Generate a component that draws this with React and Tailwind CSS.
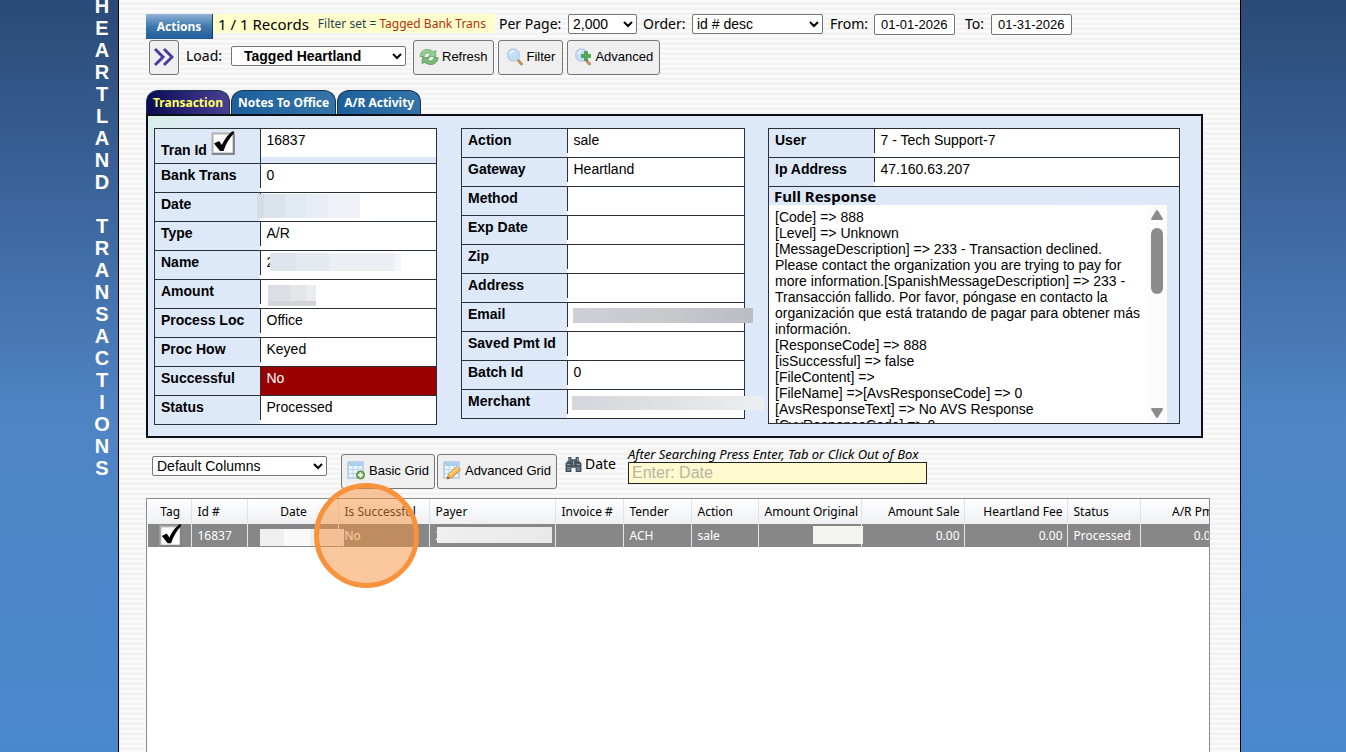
import clsx from "clsx";

const LETTERS = "HEARTLAND TRANSACTIONS".split("");

const TRAN_ROWS = [
  { label: "Bank Trans", value: "0" },
  { label: "Date", mask: "date" },
  { label: "Type", value: "A/R" },
  { label: "Name", value: "2", mask: "name" },
  { label: "Amount", mask: "amount" },
  { label: "Process Loc", value: "Office" },
  { label: "Proc How", value: "Keyed" },
  { label: "Successful", value: "No", danger: true },
  { label: "Status", value: "Processed" },
];

const ACTION_ROWS = [
  { label: "Action", value: "sale" },
  { label: "Gateway", value: "Heartland" },
  { label: "Method" },
  { label: "Exp Date" },
  { label: "Zip" },
  { label: "Address" },
  { label: "Email", mask: "email" },
  { label: "Saved Pmt Id" },
  { label: "Batch Id", value: "0" },
  { label: "Merchant", mask: "merchant" },
];

const USER_ROWS = [
  { label: "User", value: "7 - Tech Support-7" },
  { label: "Ip Address", value: "47.160.63.207" },
];

const RESPONSE = [
  "[Code] => 888",
  "[Level] => Unknown",
  "[MessageDescription] => 233 - Transaction declined. Please contact the organization you are trying to pay for more information.[SpanishMessageDescription] => 233 - Transacción fallido. Por favor, póngase en contacto la organización que está tratando de pagar para obtener más información.",
  "[ResponseCode] => 888",
  "[isSuccessful] => false",
  "[FileContent] =>",
  "[FileName] =>[AvsResponseCode] => 0",
  "[AvsResponseText] => No AVS Response",
  "[CvvResponseCode] => 0",
];

const MASKS = {
  date: "-left-[4px] top-[1px] w-[103px] h-[24px] bg-[linear-gradient(to_right,#d3dbe3_7%,#dbe4ed_7%,#dbe4ed_27%,#e2eaf1_27%,#e2eaf1_48%,#e8edf4_48%,#e8edf4_69%,#eff3f8_69%)]",
  name: "left-[9px] top-[2px] w-[131px] h-[18px] bg-[linear-gradient(to_right,#dfe3ec_20%,#e4e8ef_20%,#e4e8ef_45%,#ebeef3_45%,#ebeef3_95%,#f3f5f8_95%)]",
  amount: "left-[7px] top-[5px] w-[48px] h-[21px] border-b-[5px] border-[#d3d5da] bg-[linear-gradient(to_right,#dcdee3_46%,#e4e5e9_46%,#e4e5e9_80%,#ebecef_80%)]",
  email: "left-[5px] top-[5px] w-[180px] h-[15px] bg-linear-to-r from-[#cfd0d6] via-[#c8c9cd] to-[#bcbdc4]",
  merchant: "left-[4px] top-[6px] w-[192px] h-[14px] bg-linear-to-r from-[#d4d6dc] via-[#e0e1e3] to-[#eceff0]",
};

const COLUMNS = [
  { name: "Tag", width: "w-[43px]", align: "text-center" },
  { name: "Id #", width: "w-[56px]", value: "16837" },
  { name: "Date", width: "w-[91px]", align: "text-center", mask: "left-[12px] w-[84px] top-[5px] h-[17px] bg-[linear-gradient(to_right,#efefef_28%,#f9f9f9_28%,#f9f9f9_60%,#efefef_60%)] z-10" },
  { name: "Is Successful", width: "w-[91px]", value: "No" },
  { name: "Payer", width: "w-[126px]", value: "2", mask: "left-[7px] w-[115px] top-[3px] h-[16px] bg-linear-to-r from-[#efefef] to-[#e9e9e9]" },
  { name: "Invoice #", width: "w-[68px]" },
  { name: "Tender", width: "w-[68px]", value: "ACH" },
  { name: "Action", width: "w-[67px]", value: "sale" },
  { name: "Amount Original", width: "w-[103px]", align: "text-right", mask: "left-[54px] w-[50px] top-[2px] h-[18px] bg-[#f3f3ef] z-10" },
  { name: "Amount Sale", width: "w-[103px]", align: "text-right", value: "0.00" },
  { name: "Heartland Fee", width: "w-[103px]", align: "text-right", value: "0.00" },
  { name: "Status", width: "w-[73px]", value: "Processed" },
  { name: "A/R Pmt", width: "w-[82px]", align: "text-right", value: "0.00" },
];

const SANS = "font-['Liberation_Sans',Arial,sans-serif]";
const TAHOMA = "font-['Noto_Sans',Tahoma,sans-serif]";
const SELECT = `h-[20px] rounded-[2px] border border-[#767676] bg-white text-black ${SANS}`;
const BUTTON = `flex h-[35px] items-center gap-[3px] rounded-[3px] border border-[#767676] bg-[#efefef] pb-[2px] text-[13px] text-black ${SANS}`;

function CheckedBox({ size }) {
  return (
    <svg width={size} height={size} viewBox="0 0 24 24">
      <rect x="1.500" y="2.500" width="21" height="20" fill="#fff" stroke="#b0b0b0" strokeWidth="2" />
      <path d="M1 23h22V3" fill="none" stroke="#777" strokeWidth="1.500" />
      <path d="M3 12.500l5-2.500 3 4c2-5 6-11 11-14l1.500 1.500C18.500 7 15 12.500 12.500 20H9z" fill="#000" />
    </svg>
  );
}

function RefreshIcon() {
  return (
    <svg width="20" height="20" viewBox="0 0 20 20">
      <path d="M1 9.500C1 5 4.500 2.500 8.500 2.500c2.500 0 4.500 1 5.700 2.300L17 3.500 16.500 9.500H9.500L11.500 7c-.8-.8-2-1.200-3.200-1-2 .2-3 1.500-3.300 3.500z" fill="#93cd90" stroke="#64a765" strokeWidth=".8" />
      <path d="M19 10.500c0 4.500-3.500 7-7.500 7-2.500 0-4.500-1-5.700-2.300L3 16.500l.5-6h7L8.500 13c.8.800 2 1.200 3.200 1 2-.2 3-1.500 3.300-3.500z" fill="#79bb79" stroke="#549556" strokeWidth=".8" />
    </svg>
  );
}

function LensIcon({ plus }) {
  return (
    <svg width="18" height="18" viewBox="0 0 18 18">
      <path d="M11.500 11.500l4 4.500" stroke="#c09060" strokeWidth="3" strokeLinecap="round" />
      <circle cx="7.500" cy="7" r="6" fill="#c3def8" stroke="#b9cde6" strokeWidth="1.400" />
      <path d="M4 6c.6-2 2-3 4-3" fill="none" stroke="#eff8ff" strokeWidth="1.500" />
      {plus && <path d="M10.500 3.500h3v3h3v3h-3v3h-3v-3h-3v-3h3z" fill="#4fae50" stroke="#3b8f42" strokeWidth=".7" />}
    </svg>
  );
}

function GridIcon({ pencil }) {
  return (
    <svg width="19" height="19" viewBox="0 0 19 19">
      <rect x="1" y="1" width="15" height="16" fill="#eaf4fd" stroke="#8fb3d9" />
      <path d="M1.500 1.500h14V5h-14z" fill="#a9cdee" />
      <path d="M1 8.500h15M1 12.500h15M6 5v12M11 5v12" stroke="#bcd3ea" />
      {pencil ? (
        <g>
          <path d="M4 18l1.500-5L14 5.500l3.500 3.500L9 16.500z" fill="#f4b94f" stroke="#c98226" strokeWidth=".8" />
          <path d="M6.500 14l8.500-7.500" stroke="#fbdc93" strokeWidth="1.200" />
          <path d="M4 18l.8-2.500 1.700 1.700z" fill="#5a4630" />
        </g>
      ) : (
        <g>
          <circle cx="13.500" cy="14" r="4" fill="#7db665" stroke="#4b8438" />
          <path d="M13.500 11.500v5M11 14h5" stroke="#fff" strokeWidth="1.600" />
        </g>
      )}
    </svg>
  );
}

function Binoculars() {
  return (
    <svg width="17" height="17" viewBox="0 0 16 16">
      <path d="M3 1h3v2h4V1h3v3l2.500 3v8H10v-4H6v4H.500V7L3 4z" fill="#46535f" />
      <path d="M2 8h3M11 8h3M2 11h3M11 11h3M2 13h3M11 13h3M4 2v3M12 2v3M8 4v5" stroke="#93a3b1" />
    </svg>
  );
}

function Field({ label, value, mask, danger, tag }) {
  return (
    <tr className="border-b border-[#2b2f36]">
      <th scope="row" className={clsx("w-[105px] px-[6px] pt-[2px] text-left align-top font-bold", tag ? "h-[35px]" : "h-[29px]")}>
        <span className="flex items-baseline gap-1">
          {label}
          {tag && <CheckedBox size={24} />}
        </span>
      </th>
      <td className={clsx("p-0 align-top", danger && "bg-[#990000] text-white", !tag && !danger && "bg-white")}>
        <div className={clsx("relative border-l border-[#2b2f36] px-[6px] pt-[2px]", tag ? "h-[34px] bg-[linear-gradient(white_28px,transparent_28px)]" : "h-[24px]")}>
          {value}
          {mask && <span className={clsx("absolute", MASKS[mask])} />}
        </div>
      </td>
    </tr>
  );
}

function Tab({ children, active }) {
  return (
    <button
      className={clsx(
        "h-[24px] rounded-t-[12px] border border-b-0 border-[#16344f] px-[6px] text-xs font-bold",
        active ? "bg-linear-to-r from-[#0d0a55] to-[#4a3f94] text-[#ffff66]" : "bg-linear-to-r from-[#1c5f9c] to-[#3474a8] text-white"
      )}
    >
      {children}
    </button>
  );
}

function Toolbar() {
  return (
    <div className="text-sm leading-[20px]">
      <div className="flex h-[26px] items-start whitespace-nowrap">
        <button className="h-[25px] w-[67px] border-r border-[#1d3d5c] bg-linear-to-b from-[#8fb3d6] via-[#3f77ad] to-[#1f5c99] text-xs font-bold text-white">Actions</button>
        <div className="flex h-[19px] w-[282px] items-center gap-[9px] bg-[#ffffcc] pl-[5px] text-[15px]">
          <span>1 / 1 Records</span>
          <span className="pt-px text-xs text-[#1f3f4f]">
            Filter set = <span className="text-[#b03010]">Tagged Bank Trans</span>
          </span>
        </div>
        <label htmlFor="perPage" className="ml-[4px] w-[69px]">Per Page:</label>
        <select id="perPage" className={clsx(SELECT, "w-[69px]")}>
          <option>2,000</option>
        </select>
        <label htmlFor="order" className="ml-[6px] w-[49px]">Order:</label>
        <select id="order" className={clsx(SELECT, "w-[131px]")}>
          <option>id # desc</option>
        </select>
        <label htmlFor="from" className="ml-[7px] w-[44px]">From:</label>
        <input id="from" defaultValue="01-01-2026" className={clsx(SELECT, "h-[21px] w-[81px] px-[6px] text-[13px]")} />
        <label htmlFor="to" className="ml-[10px] w-[26px]">To:</label>
        <input id="to" defaultValue="01-31-2026" className={clsx(SELECT, "h-[21px] w-[81px] px-[6px] text-[13px]")} />
      </div>
      <div className="flex items-start pl-[3px]">
        <button aria-label="Expand" className={clsx(BUTTON, "w-[30px] justify-center")}>
          <svg width="20" height="20" viewBox="0 0 20 20" fill="none" stroke="#483d9b" strokeWidth="3">
            <path d="M1 2l8 8-8 8M10 2l8 8-8 8" />
          </svg>
        </button>
        <label htmlFor="load" className="mt-[6px] ml-[7px] w-[45px]">Load:</label>
        <select id="load" className={clsx(SELECT, "mt-[6px] w-[175px] pl-[8px] font-bold")}>
          <option>Tagged Heartland</option>
        </select>
        <div className="ml-[7px] flex gap-1">
          <button className={clsx(BUTTON, "px-[5px]")}><RefreshIcon />Refresh</button>
          <button className={clsx(BUTTON, "px-[7px]")}><LensIcon />Filter</button>
          <button className={clsx(BUTTON, "px-[6px]")}><LensIcon plus />Advanced</button>
        </div>
      </div>
    </div>
  );
}

function TransactionPanel() {
  return (
    <section className={`mr-[37px] flex items-start border-2 border-[#0b0f18] bg-linear-to-br from-[#d9f0e8] via-[#dde8f8] via-5% to-[#dde8fa] px-[6px] pt-[12px] pb-[11px] text-sm leading-[18px] text-black ${SANS}`}>
      <table className="w-[283px] table-fixed border-collapse border border-[#2b2f36]">
        <tbody>
          <Field tag label="Tran Id" value="16837" />
          {TRAN_ROWS.map((r) => <Field key={r.label} {...r} />)}
        </tbody>
      </table>
      <table className="ml-[24px] w-[284px] table-fixed border-collapse border border-[#2b2f36]">
        <tbody>
          {ACTION_ROWS.map((r) => <Field key={r.label} {...r} />)}
        </tbody>
      </table>
      <div className="ml-[23px] flex h-[296px] w-[412px] flex-col border border-t-0 border-[#2b2f36]">
        <table className="-mx-px w-[412px] shrink-0 table-fixed border-collapse border border-[#2b2f36]">
          <tbody>
            {USER_ROWS.map((r) => <Field key={r.label} {...r} />)}
          </tbody>
        </table>
        <h2 className={`h-[18px] shrink-0 pl-[5px] text-[15px] leading-[18px] font-bold ${TAHOMA}`}>Full Response</h2>
        <div className="mr-[12px] flex min-h-0 flex-1 bg-white">
          <div className="flex-1 overflow-hidden pt-[4px] pl-[6px] leading-[16px]">
            {RESPONSE.map((line) => <p key={line}>{line}</p>)}
          </div>
          <div className="flex w-[20px] flex-col items-center justify-between bg-[#fcfcfc] pt-[5px] pb-[5px]">
            <svg width="12" height="10" viewBox="0 0 12 10"><path d="M6 1l5 8H1z" fill="#8b8b8b" stroke="#8b8b8b" strokeWidth="2" strokeLinejoin="round" /></svg>
            <div className="mt-[8px] mb-auto h-[66px] w-[12px] rounded-full bg-[#8b8b8b]" />
            <svg width="12" height="10" viewBox="0 0 12 10"><path d="M6 9l5-8H1z" fill="#8b8b8b" stroke="#8b8b8b" strokeWidth="2" strokeLinejoin="round" /></svg>
          </div>
        </div>
      </div>
    </section>
  );
}

function SearchBar() {
  return (
    <div className="flex items-start pt-[8px] pl-[6px]">
      <select aria-label="Columns" className={clsx(SELECT, "mt-[10px] w-[175px] text-sm")}>
        <option>Default Columns</option>
      </select>
      <div className="mt-[8px] ml-[14px] flex gap-[2px]">
        <button className={clsx(BUTTON, "px-[5px]")}><GridIcon />Basic Grid</button>
        <button className={clsx(BUTTON, "px-[5px]")}><GridIcon pencil />Advanced Grid</button>
      </div>
      <label htmlFor="date" className="mt-[8px] ml-[8px] flex w-[63px] items-center gap-[3px] text-sm"><Binoculars />Date</label>
      <div className="w-[299px]">
        <p className="text-[13px] leading-[16px] whitespace-nowrap italic">After Searching Press Enter, Tab or Click Out of Box</p>
        <input id="date" placeholder="Enter: Date" className={`block h-[22px] w-full border border-[#222] bg-[#fffacd] px-[3px] text-base placeholder:text-[#b5b5a5] ${SANS}`} />
      </div>
    </div>
  );
}

function Grid() {
  return (
    <div className="relative mt-[9px] mr-[30px] flex-1 border border-b-0 border-[#8a8a8a] bg-white">
      <div className="overflow-hidden px-px">
        <table className="w-[1074px] table-fixed border-collapse text-xs">
          <thead>
            <tr className="h-[25px] bg-linear-to-b from-white to-[#eef0f3]">
              {COLUMNS.map((c) => (
                <th key={c.name} className={clsx("border-r border-[#dde3ea] pr-[4px] pl-[6px] font-normal whitespace-nowrap", c.width, c.align || "text-left")}>{c.name}</th>
              ))}
            </tr>
          </thead>
          <tbody>
            <tr className="h-[23px] bg-[#878787] text-white">
              {COLUMNS.map((c) => (
                <td key={c.name} className={clsx("relative border-r border-[#e5e5e5] py-0 pr-[4px] pl-[6px]", c.align)}>
                  {c.name === "Tag" ? <span className="flex justify-center"><CheckedBox size={23} /></span> : c.value}
                  {c.mask && <span className={clsx("absolute", c.mask)} />}
                </td>
              ))}
            </tr>
          </tbody>
        </table>
      </div>
      <div className="absolute -top-[16px] left-[167px] z-20 size-[105px] rounded-full border-[5px] border-[#f8923c] bg-[#f8923c]/50" />
    </div>
  );
}

export default function App() {
  return (
    <div className={`flex min-h-screen bg-linear-to-b from-[#2a4a77] via-[#4f84c4] via-55% to-[#4a88ce] text-black ${TAHOMA}`}>
      <aside className="flex w-[118px] shrink-0 justify-end pr-[6px]">
        <h1 className={`-mt-[5px] flex w-[20px] flex-col text-center text-[20px] font-bold text-white ${SANS}`}>
          {LETTERS.map((l, i) => <span key={i} className="h-[22px] leading-[22px]">{l}</span>)}
        </h1>
      </aside>
      <main className="flex min-w-0 flex-1 flex-col border-x border-black bg-[repeating-linear-gradient(to_bottom,#fafafa_0px,#fafafa_2px,#f2f2f2_3px,#f2f2f2_5px)] pt-[14px] pl-[27px]">
        <Toolbar />
        <nav className="mt-[15px] flex gap-px">
          <Tab active>Transaction</Tab>
          <Tab>Notes To Office</Tab>
          <Tab>A/R Activity</Tab>
        </nav>
        <TransactionPanel />
        <SearchBar />
        <Grid />
      </main>
      <div className="w-[105px] shrink-0" />
    </div>
  );
}
